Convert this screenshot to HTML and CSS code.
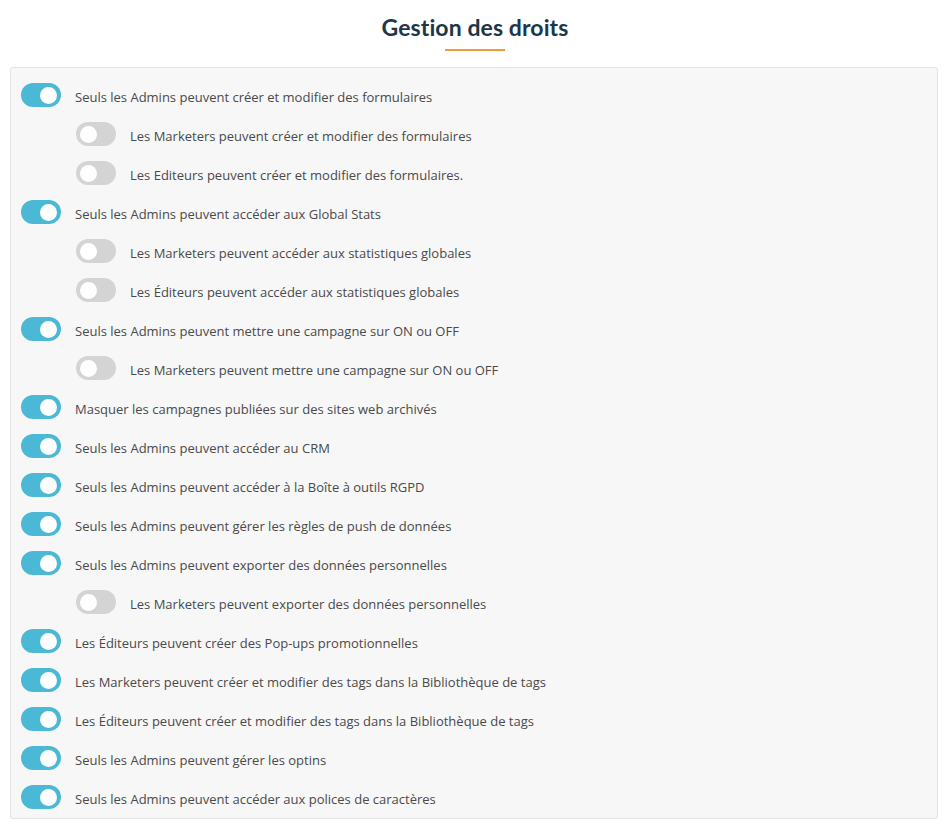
FILE: index.html
```html
<!DOCTYPE html>
<html lang="fr">
<head>
<meta charset="utf-8">
<title>Gestion des droits</title>
<link rel="stylesheet" href="styles.css">
</head>
<body>
<header class="head">
  <h1 class="title">Gestion des droits</h1>
  <div class="bar"></div>
</header>
<section class="panel">
  <div class="row"><span class="toggle on"></span><span class="label">Seuls les Admins peuvent créer et modifier des formulaires</span></div>
  <div class="row sub"><span class="toggle"></span><span class="label">Les Marketers peuvent créer et modifier des formulaires</span></div>
  <div class="row sub"><span class="toggle"></span><span class="label">Les Editeurs peuvent créer et modifier des formulaires.</span></div>
  <div class="row"><span class="toggle on"></span><span class="label">Seuls les Admins peuvent accéder aux Global Stats</span></div>
  <div class="row sub"><span class="toggle"></span><span class="label">Les Marketers peuvent accéder aux statistiques globales</span></div>
  <div class="row sub"><span class="toggle"></span><span class="label">Les Éditeurs peuvent accéder aux statistiques globales</span></div>
  <div class="row"><span class="toggle on"></span><span class="label">Seuls les Admins peuvent mettre une campagne sur ON ou OFF</span></div>
  <div class="row sub"><span class="toggle"></span><span class="label">Les Marketers peuvent mettre une campagne sur ON ou OFF</span></div>
  <div class="row"><span class="toggle on"></span><span class="label">Masquer les campagnes publiées sur des sites web archivés</span></div>
  <div class="row"><span class="toggle on"></span><span class="label">Seuls les Admins peuvent accéder au CRM</span></div>
  <div class="row"><span class="toggle on"></span><span class="label">Seuls les Admins peuvent accéder à la Boîte à outils RGPD</span></div>
  <div class="row"><span class="toggle on"></span><span class="label">Seuls les Admins peuvent gérer les règles de push de données</span></div>
  <div class="row"><span class="toggle on"></span><span class="label">Seuls les Admins peuvent exporter des données personnelles</span></div>
  <div class="row sub"><span class="toggle"></span><span class="label">Les Marketers peuvent exporter des données personnelles</span></div>
  <div class="row"><span class="toggle on"></span><span class="label">Les Éditeurs peuvent créer des Pop-ups promotionnelles</span></div>
  <div class="row"><span class="toggle on"></span><span class="label">Les Marketers peuvent créer et modifier des tags dans la Bibliothèque de tags</span></div>
  <div class="row"><span class="toggle on"></span><span class="label">Les Éditeurs peuvent créer et modifier des tags dans la Bibliothèque de tags</span></div>
  <div class="row"><span class="toggle on"></span><span class="label">Seuls les Admins peuvent gérer les optins</span></div>
  <div class="row"><span class="toggle on"></span><span class="label">Seuls les Admins peuvent accéder aux polices de caractères</span></div>
</section>
</body>
</html>
```
FILE: styles.css
```css
* { box-sizing: border-box; }
html, body { margin: 0; padding: 0; background: #ffffff; }
body {
  font-family: "Open Sans", "Liberation Sans", sans-serif;
  color: #4a4a4a;
  width: 950px;
}
.head {
  display: flex;
  flex-direction: column;
  align-items: center;
  padding-top: 13px;
  height: 67px;
}
.title {
  margin: 0;
  font-family: "Lato", "Open Sans", sans-serif;
  font-weight: 700;
  font-size: 23px;
  line-height: 28px;
  color: #1c3748;
  letter-spacing: 0.1px;
}
.bar {
  margin-top: 8px;
  width: 60px;
  height: 2px;
  background: #f39a3c;
}
.panel {
  margin-left: 10px;
  width: 928px;
  height: 752px;
  background: #f7f7f7;
  border: 1px solid #e4e4e4;
  border-radius: 3px;
  padding: 15px 0 0 10px;
  display: flex;
  flex-direction: column;
  gap: 15px;
}
.row {
  display: flex;
  align-items: center;
  height: 24px;
  gap: 14px;
}
.row.sub { padding-left: 55px; }
.toggle {
  position: relative;
  flex: none;
  width: 40px;
  height: 24px;
  border-radius: 12px;
  background: #d4d4d4;
}
.toggle::after {
  content: "";
  position: absolute;
  top: 3.5px;
  left: 4px;
  width: 17px;
  height: 17px;
  border-radius: 50%;
  background: #ffffff;
}
.toggle.on { background: #4bb9d5; }
.toggle.on::after { left: 19px; }
.label {
  font-size: 13px;
  line-height: 18px;
  padding-top: 4px;
}
```
